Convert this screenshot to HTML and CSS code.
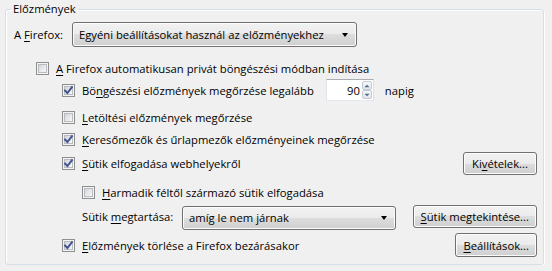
FILE: index.html
```html
<!DOCTYPE html>
<html lang="hu">
<head>
<meta charset="utf-8">
<title>Előzmények</title>
<link rel="stylesheet" href="styles.css">
</head>
<body>
<fieldset class="group">
  <legend class="group-title">Előzmények</legend>

  <div class="row row-mode">
    <span class="lbl lbl-mode">A <u>F</u>irefox:</span>
    <div class="select select-mode"><span class="select-text">Egyéni beállításokat használ az előzményekhez</span><span class="arrow"></span></div>
  </div>

  <div class="row row-private lvl1">
    <span class="cb"></span>
    <span class="cb-text"><u>A</u> Firefox automatikusan privát böngészési módban indítása</span>
  </div>

  <div class="row row-history lvl2">
    <span class="cb"><svg class="tick" viewBox="0 0 13 13"><path d="M3 6.5 L5.4 9 L10 3.2"/></svg></span>
    <span class="cb-text">Bö<u>n</u>gészési előzmények megőrzése legalább</span>
    <span class="spin">
      <span class="spin-value">90</span>
      <span class="spin-btns">
        <span class="spin-btn"><svg viewBox="0 0 7 4"><path d="M0.5 3.5 L3.5 0.5 L6.5 3.5Z"/></svg></span>
        <span class="spin-btn"><svg viewBox="0 0 7 4"><path d="M0.5 0.5 L3.5 3.5 L6.5 0.5Z"/></svg></span>
      </span>
    </span>
    <span class="unit">napig</span>
  </div>

  <div class="row row-downloads lvl2">
    <span class="cb"></span>
    <span class="cb-text"><u>L</u>etöltési előzmények megőrzése</span>
  </div>

  <div class="row row-forms lvl2">
    <span class="cb"><svg class="tick" viewBox="0 0 13 13"><path d="M3 6.5 L5.4 9 L10 3.2"/></svg></span>
    <span class="cb-text"><u>K</u>eresőmezők és űrlapmezők előzményeinek megőrzése</span>
  </div>

  <div class="row row-cookies lvl2">
    <span class="cb"><svg class="tick" viewBox="0 0 13 13"><path d="M3 6.5 L5.4 9 L10 3.2"/></svg></span>
    <span class="cb-text"><u>S</u>ütik elfogadása webhelyekről</span>
    <button class="btn">Ki<u>v</u>ételek...</button>
  </div>

  <div class="row row-third lvl3">
    <span class="cb"></span>
    <span class="cb-text"><u>H</u>armadik féltől származó sütik elfogadása</span>
  </div>

  <div class="row row-keep lvl3">
    <span class="lbl lbl-keep">Sütik <u>m</u>egtartása:</span>
    <div class="select select-keep"><span class="select-text">amíg le nem járnak</span><span class="arrow"></span></div>
    <button class="btn"><u>S</u>ütik megtekintése...</button>
  </div>

  <div class="row row-clear lvl2">
    <span class="cb"><svg class="tick" viewBox="0 0 13 13"><path d="M3 6.5 L5.4 9 L10 3.2"/></svg></span>
    <span class="cb-text"><u>E</u>lőzmények törlése a Firefox bezárásakor</span>
    <button class="btn"><u>B</u>eállítások...</button>
  </div>
</fieldset>
</body>
</html>
```

FILE: styles.css
```css
html, body {
  margin: 0;
  background: #f0f0f0;
}
body {
  padding: 1px 8px 0 5px;
  font-family: "Open Sans", "Noto Sans", sans-serif;
  font-size: 11.25px;
  color: #000;
}
u {
  text-decoration: underline;
  text-underline-offset: 2px;
}

.group {
  margin: 0;
  padding: 5px 6px 7px 8px;
  border: 1px solid #d5dfe5;
  border-radius: 3px;
  box-shadow: inset 1px 1px 0 #fff, 1px 1px 0 #fff;
  min-inline-size: 0;
}
.group-title {
  margin-left: -3px;
  padding: 0 2px;
  line-height: 16px;
}

.row {
  display: flex;
  align-items: center;
  height: 22px;
  white-space: nowrap;
}
.lvl1 { padding-left: 22px; }
.lvl2 { padding-left: 48px; }
.lvl3 { padding-left: 68px; }

.row-mode { height: 25px; }
.row-private { height: 20px; margin-top: 11px; margin-bottom: 1px; }
.row-history { height: 22px; }
.row-downloads { margin-top: 5px; }
.row-cookies { height: 23px; margin-top: 2px; }
.row-third { margin-top: 6px; }
.row-keep { height: 25px; margin-top: 1px; }
.row-clear { height: 24px; margin-top: 4px; }

.lbl { flex: none; }
.lbl-mode { width: 58px; }
.lbl-keep { width: 100px; }

/* checkbox */
.cb {
  flex: none;
  width: 13px;
  height: 13px;
  box-sizing: border-box;
  border: 1px solid #8e8f8f;
  background: #f4f4f4;
  padding: 1px;
  margin-right: 7px;
  position: relative;
}
.cb::before {
  content: "";
  display: block;
  width: 9px;
  height: 9px;
  box-sizing: border-box;
  border: 1px solid #b9bcc1;
  background: linear-gradient(135deg, #d2d4d8 0%, #e8e9eb 55%, #f8f8f8 100%);
}
.tick {
  position: absolute;
  left: -1px;
  top: -1px;
  width: 13px;
  height: 13px;
}
.tick path {
  fill: none;
  stroke: #3f528e;
  stroke-width: 1.9;
  stroke-linecap: square;
}

/* select */
.select {
  display: flex;
  align-items: center;
  box-sizing: border-box;
  height: 25px;
  border: 1px solid #707070;
  border-radius: 3px;
  box-shadow: inset 0 0 0 1px #fcfcfc;
  background: linear-gradient(#f2f2f2 0%, #ebebeb 50%, #dddddd 50%, #cfcfcf 100%);
  padding: 0 8px 0 6px;
}
.select-text { flex: 1; }
.select-mode { width: 285px; }
.select-keep { width: 214px; height: 24px; margin-top: 2px; }
.arrow {
  width: 0;
  height: 0;
  border-left: 3.5px solid transparent;
  border-right: 3.5px solid transparent;
  border-top: 4px solid #000;
  margin-left: 6px;
}

/* button */
.btn {
  margin-left: auto;
  box-sizing: border-box;
  height: 23px;
  min-width: 74px;
  padding: 0 7px;
  font: inherit;
  color: #000;
  border: 1px solid #707070;
  border-radius: 3px;
  box-shadow: inset 0 0 0 1px #fcfcfc;
  background: linear-gradient(#f2f2f2 0%, #ebebeb 50%, #dddddd 50%, #cfcfcf 100%);
}
.row-clear .btn { height: 24px; }

/* spinner */
.spin {
  display: flex;
  align-items: stretch;
  box-sizing: border-box;
  height: 22px;
  width: 48px;
  margin-left: 12px;
  background: #fff;
  border: 1px solid #abadb3;
  border-left-color: #e2e3ea;
  border-right-color: #dbdfe6;
  border-bottom-color: #e3e9ef;
}
.spin-value {
  flex: 1;
  text-align: right;
  align-self: center;
  padding-right: 2px;
}
.spin-btns {
  display: flex;
  flex-direction: column;
  width: 10px;
  padding: 1px 1px 1px 0;
}
.spin-btn {
  flex: 1;
  display: flex;
  align-items: center;
  justify-content: center;
  border: 1px solid #c5cbd3;
  border-radius: 2px;
  background: linear-gradient(#f6f8fa, #dfe5ec);
}
.spin-btn svg {
  width: 6px;
  height: 4px;
}
.spin-btn path { fill: #4e6a8f; }
.unit { margin-left: 11px; }
```
